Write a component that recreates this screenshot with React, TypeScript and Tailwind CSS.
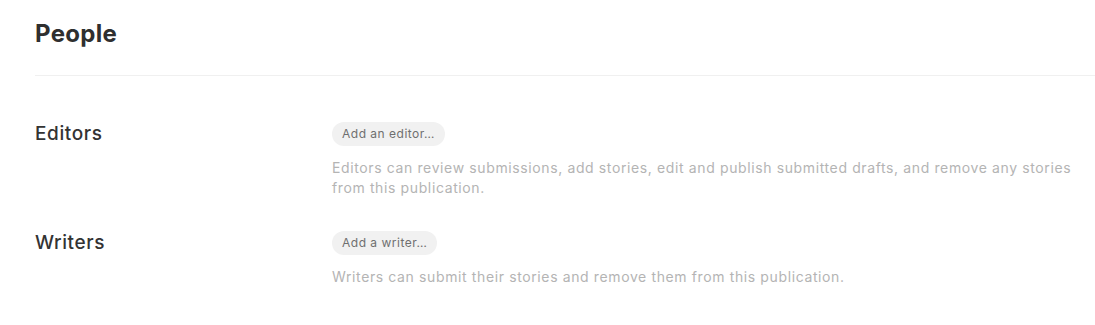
import React from "react";

type RoleProps = {
  label: string;
  action: string;
  description: string;
};

function RoleRow({ label, action, description }: RoleProps) {
  return (
    <div className="flex">
      <div className="w-[297px] shrink-0 pt-[2px] text-[19px] font-medium tracking-[0.6px] text-[#333333] leading-[24px]">
        {label}
      </div>
      <div className="flex-1">
        <button className="h-[24px] px-[10px] rounded-full bg-[#f1f1f1] text-[12px] tracking-[0.5px] text-[#6f6f6f] leading-[24px]">
          {action}
        </button>
        <p className="mt-[12px] max-w-[750px] text-[14px] tracking-[0.62px] leading-[20px] text-[#b4b4b4]">
          {description}
        </p>
      </div>
    </div>
  );
}

export default function App() {
  return (
    <div className="bg-white w-[1095px] h-[325px] pl-[35px] pt-[18px] font-['Inter',sans-serif]">
      <h1 className="text-[24px] font-bold tracking-[0.3px] text-[#2f2f2f] leading-[32px]">People</h1>
      <div className="mt-[25px] h-px bg-[#f0f0f0]" />
      <div className="mt-[44px] flex flex-col gap-[31px]">
        <RoleRow
          label="Editors"
          action="Add an editor…"
          description="Editors can review submissions, add stories, edit and publish submitted drafts, and remove any stories from this publication."
        />
        <RoleRow
          label="Writers"
          action="Add a writer…"
          description="Writers can submit their stories and remove them from this publication."
        />
      </div>
    </div>
  );
}
